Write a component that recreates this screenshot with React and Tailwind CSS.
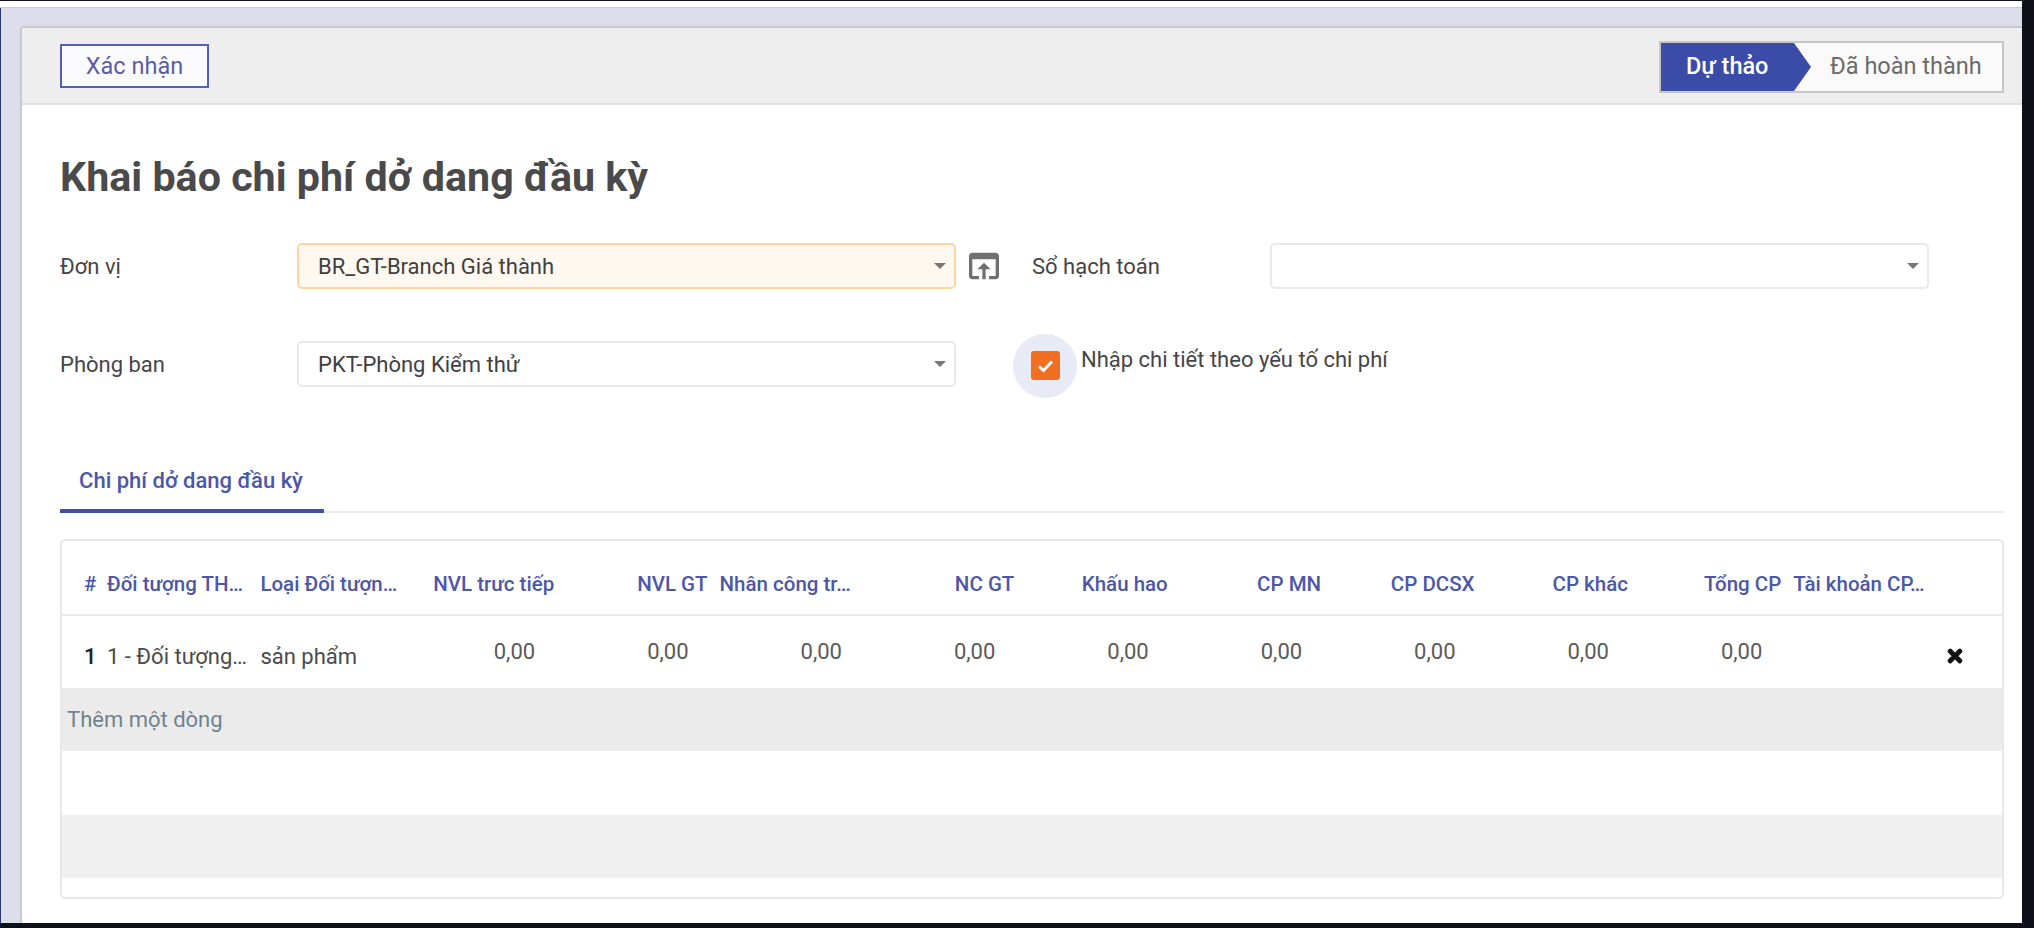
import React from "react";
import { FaTimes } from "react-icons/fa";

const grid = "grid grid-cols-[39px_153.4px_153.4px_repeat(10,153.4px)_1fr]";

const headers = [
  ["NVL trưc tiếp", "text-right"],
  ["NVL GT", "text-right"],
  ["Nhân công tr…", "text-left pl-[5px]"],
  ["NC GT", "text-right"],
  ["Khấu hao", "text-right"],
  ["CP MN", "text-right"],
  ["CP DCSX", "text-right"],
  ["CP khác", "text-right"],
  ["Tổng CP", "text-right"],
];

function Caret() {
  return (
    <svg width="12" height="6" viewBox="0 0 12 6" className="shrink-0">
      <polygon points="0,0 12,0 6,6" fill="#777777" />
    </svg>
  );
}

function Select({ value, tinted }) {
  return (
    <div
      className={
        "flex h-[46px] w-[659px] items-center justify-between rounded-[5px] border-2 pl-[19px] pr-[8px] text-[22px] text-[#3f3f3f] " +
        (tinted ? "border-[#ffd59f] bg-[#fff8f0]" : "border-[#e9e9e9] bg-white")
      }
    >
      <span>{value}</span>
      <Caret />
    </div>
  );
}

export default function App() {
  return (
    <div className="flex h-[928px] w-[2034px] flex-col bg-[#0e1119] font-['Roboto',sans-serif]">
      <div className="flex h-[923px] w-[2022px] flex-col border-l border-[#2f3a78] bg-[#dcdfeb]">
        <div className="h-[8px] border-b border-[#c9c9c9] border-t border-t-[#0e1119] bg-white -ml-px" />
        <div className="ml-[19px] mt-[18px] flex min-h-0 flex-1 flex-col overflow-hidden rounded-tl-[4px] border-l-2 border-t-2 border-[#c8c9cc] bg-white">
          <div className="flex h-[77px] shrink-0 items-start justify-between border-b-2 border-[#dfe0e2] bg-[#eeeeee] pl-[38px] pr-[18px] pt-[15px]">
            <button className="mt-px h-[44px] w-[149px] border-2 border-[#5261b5] bg-[#fbfbfd] pt-[2px] text-[23.5px] text-[#5a5ca8]">
              Xác nhận
            </button>
            <div className="-mt-[2px] flex h-[52px] w-[345px] border-2 border-[#c6c6c6] bg-[#fafafa]">
              <div className="flex w-[150px] items-center bg-[#3b4ba8] pl-[25px] text-[23.5px] font-medium text-white [clip-path:polygon(0_0,133px_0,100%_50%,133px_100%,0_100%)]">
                Dự thảo
              </div>
              <div className="flex items-center pl-[19px] text-[23.5px] text-[#6b6b6b]">Đã hoàn thành</div>
            </div>
          </div>

          <h1 className="ml-[38px] mt-[49px] text-[41.2px] leading-[46px] font-bold text-[#4a4a4a]">
            Khai báo chi phí dở dang đầu kỳ
          </h1>

          <div className="ml-[38px] mt-[43px] flex items-center">
            <div className="w-[237px] text-[22px] text-[#454545]">Đơn vị</div>
            <Select value="BR_GT-Branch Giá thành" tinted />
            <svg width="40" height="40" viewBox="0 0 24 24" className="ml-[8px]" fill="#6f6f6f">
              <path d="M19 4H5c-1.11 0-2 .9-2 2v12c0 1.1.89 2 2 2h4v-2H5V8h14v10h-4v2h4c1.1 0 2-.9 2-2V6c0-1.1-.89-2-2-2zm-7 6l-4 4h3v6h2v-6h3l-4-4z" />
            </svg>
            <div className="ml-[28px] w-[238px] text-[22px] text-[#454545]">Sổ hạch toán</div>
            <Select value="" />
          </div>

          <div className="ml-[38px] mt-[52px] flex items-start">
            <div className="flex h-[46px] w-[237px] items-center text-[22px] text-[#454545]">Phòng ban</div>
            <Select value="PKT-Phòng Kiểm thử" />
            <div className="relative ml-[75px] mt-[10px] h-[29px] w-[29px]">
              <div className="absolute -left-[18px] -top-[17px] h-[64px] w-[64px] rounded-full bg-[#e8eaf5]" />
              <div className="absolute inset-0 flex items-center justify-center rounded-[3px] bg-[#f26e21]">
                <svg width="17" height="14" viewBox="0 0 17 14" fill="none">
                  <path d="M2 7.5 L6.5 11.5 L15 2.5" stroke="white" strokeWidth="3" />
                </svg>
              </div>
            </div>
            <div className="ml-[21px] mt-[6px] text-[22px] leading-[26px] text-[#454545]">
              Nhập chi tiết theo yếu tố chi phí
            </div>
          </div>

          <div className="ml-[38px] mr-[18px] mt-[73px] h-[53px] border-b-2 border-[#e9e9e9]">
            <div className="flex h-[53px] w-[264px] items-center justify-center border-b-4 border-[#3f4fae] pb-[8px] pr-[2px] text-[22px] font-medium text-[#4c57a8]">
              Chi phí dở dang đầu kỳ
            </div>
          </div>

          <div className="ml-[38px] mr-[18px] mt-[26px] flex h-[360px] flex-col overflow-hidden rounded-[5px] border-2 border-[#e8e8e8]">
            <div className={grid + " h-[75px] shrink-0 items-center border-b-2 border-[#e9e9e9] pt-[14px] text-[20.5px] font-medium whitespace-nowrap text-[#4c57a8]"}>
              <div className="pl-[22px]">#</div>
              <div className="pl-[6px] pr-[7px]">Đối tượng TH…</div>
              <div className="pl-[6px] pr-[7px]">Loại Đối tượn…</div>
              {headers.map(([label, align]) => (
                <div key={label} className={"px-[7px] " + align}>
                  {label}
                </div>
              ))}
              <div className="pl-[5px] pr-[7px]">Tài khoản CP…</div>
              <div />
            </div>
            <div className={grid + " h-[72px] shrink-0 items-center whitespace-nowrap pt-[8px] text-[#4a4a4a]"}>
              <div className="pl-[22px] text-[22px] font-medium text-[#222222]">1</div>
              <div className="pl-[6px] pr-[2px] text-[22px]">1 - Đối tượng…</div>
              <div className="pl-[6px] pr-[7px] text-[22px]">sản phẩm</div>
              {headers.map(([label]) => (
                <div key={label} className="pb-[10px] pr-[26px] text-right text-[22px] text-[#5a5a5a]">
                  0,00
                </div>
              ))}
              <div />
              <div className="flex justify-end pr-[37px]">
                <FaTimes size={20} color="#111111" stroke="#111111" strokeWidth={30} />
              </div>
            </div>
            <div className="flex h-[63px] shrink-0 items-center bg-[#ebebeb] pl-[5px] text-[22px] text-[#6f8490]">
              Thêm một dòng
            </div>
            <div className="h-[64px] shrink-0" />
            <div className="h-[63px] shrink-0 bg-[#f0f0f0]" />
          </div>
        </div>
      </div>
    </div>
  );
}
